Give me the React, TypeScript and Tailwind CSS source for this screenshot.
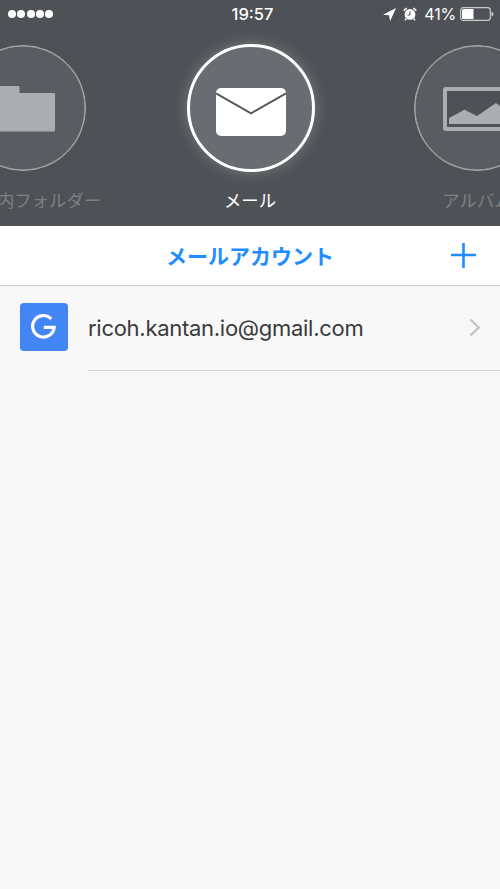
import type { ReactNode } from "react";

type Source = {
  id: string;
  label: string;
  icon: ReactNode;
  active?: boolean;
};

const FolderIcon = () => (
  <svg width="64" height="46" viewBox="0 0 64 46" fill="#acadaf">
    <path d="M1 0H27.500a1 1 0 0 1 1 1V7H63a1 1 0 0 1 1 1V44.500a1 1 0 0 1-1 1H1a1 1 0 0 1-1-1V1a1 1 0 0 1 1-1Z" />
  </svg>
);

const MailIcon = () => (
  <svg width="70" height="48" viewBox="0 0 70 48" fill="none">
    <rect width="70" height="48" rx="5" fill="#fff" />
    <path d="M0 5.300 35 25.300 70 5.300" stroke="#55585c" strokeWidth="2" />
  </svg>
);

const AlbumIcon = () => (
  <svg width="68" height="44" viewBox="0 0 68 44" fill="none">
    <rect x="2" y="2" width="64" height="40" rx="1" fill="#4e5156" stroke="#acadaf" strokeWidth="4" />
    <path d="M6 37V31L21.500 22.800 34 29 53 16 62 23V37Z" fill="#acadaf" />
  </svg>
);

const sources: Source[] = [
  { id: "folder", label: "アプリ内フォルダー", icon: <FolderIcon /> },
  { id: "mail", label: "メール", icon: <MailIcon />, active: true },
  { id: "album", label: "アルバム", icon: <AlbumIcon /> },
];

const accounts = ["ricoh.kantan.io@gmail.com"];

const StatusBar = () => (
  <div className="grid h-[28px] grid-cols-3 items-center pl-2 pr-[6px] text-white">
    <div className="flex gap-[1.300px]">
      {[0, 1, 2, 3, 4].map((dot) => (
        <span key={dot} className="size-[8px] rounded-full bg-white" />
      ))}
    </div>
    <p className="pl-[3px] text-center text-[16.500px] leading-none font-medium">19:57</p>
    <div className="flex items-center justify-end">
      <svg width="13" height="13" viewBox="0 0 13 13" className="mr-[7px]">
        <path d="M13 0 7.200 13 6 7.200 0 6.800Z" fill="#fff" />
      </svg>
      <svg width="14" height="14" viewBox="0 0 14 14" className="mr-[7px]" fill="none">
        <circle cx="7" cy="7.400" r="5.400" fill="#fff" />
        <path d="M.7 3.600 3.700 1M13.300 3.600 10.300 1M3.200 11.700 2 13.200M10.800 11.700 12 13.200" stroke="#fff" strokeWidth="1.500" />
        <path d="M7 4.200V8H4.500" stroke="#4e5156" />
      </svg>
      <span className="mr-[4px] text-[16px] leading-none tracking-[-0.2px]">41%</span>
      <svg width="34" height="14" viewBox="0 0 34 14" fill="none">
        <rect x=".7" y=".7" width="29.600" height="12.600" rx="2.500" stroke="#c9cacb" strokeWidth="1.200" />
        <path d="M3.500 2H13.500V12H3.500A1.500 1.500 0 0 1 2 10.500V3.500A1.500 1.500 0 0 1 3.500 2Z" fill="#fff" />
        <path d="M31.500 4.500Q33.500 5 33.500 7T31.500 9.500Z" fill="#c9cacb" />
      </svg>
    </div>
  </div>
);

const SourceItem = ({ source }: { source: Source }) => (
  <li className="flex w-[227px] shrink-0 flex-col items-center">
    <div className="flex h-[128px] items-center">
      <div
        className={
          source.active
            ? "ml-px flex size-[128px] items-center justify-center rounded-full border-[3px] border-white bg-[#696c70] pt-[7px] shadow-[0_0_14px_1px_rgba(255,255,255,0.22)]"
            : "flex size-[126px] items-center justify-center rounded-full border-[1.500px] border-[#acadaf] bg-[#595c61] pt-[2px] shadow-[inset_0_0_0_0.500px_#acadaf]"
        }
      >
        {source.icon}
      </div>
    </div>
    <p
      className={
        source.active
          ? "mt-4 text-[17.400px] leading-[26px] whitespace-nowrap text-white"
          : "mt-4 text-[17.400px] leading-[26px] whitespace-nowrap text-[#7e8083]"
      }
    >
      {source.label}
    </p>
  </li>
);

const App = () => {
  return (
    <div className="flex h-[889px] w-[500px] flex-col overflow-hidden bg-[#f8f8f8] font-['Inter','Noto_Sans_CJK_JP',sans-serif]">
      <header className="h-[226px] shrink-0 overflow-hidden bg-[#4e5156]">
        <StatusBar />
        <ul className="flex justify-center pt-4">
          {sources.map((source) => (
            <SourceItem key={source.id} source={source} />
          ))}
        </ul>
      </header>

      <div className="grid h-[60px] shrink-0 grid-cols-[1fr_auto_1fr] items-center border-b border-[#c8c8c8] bg-white px-6 text-[#1f8cff]">
        <h1 className="col-start-2 pt-px text-[21px] leading-none font-bold">メールアカウント</h1>
        <button className="justify-self-end" aria-label="add">
          <svg width="25" height="25" viewBox="0 0 25 25" stroke="currentColor" strokeWidth="2.600">
            <path d="M12.500 0V25M0 12H25" />
          </svg>
        </button>
      </div>

      <ul>
        {accounts.map((account) => (
          <li key={account} className="flex h-[85px] pl-5">
            <div className="mt-[17px] flex size-[48px] items-center justify-center rounded-[4px] bg-[#4285f4]">
              <svg width="26" height="26" viewBox="0 0 26 26" fill="none" stroke="#fff" strokeWidth="3.200">
                <path d="M20.300 4.900A10.800 10.800 0 1 0 23.200 13.400H12.800" />
              </svg>
            </div>
            <div className="ml-5 flex flex-1 items-center justify-between border-b border-[#d2d2d2] pr-[19px]">
              <span className="text-[22px] tracking-[-0.280px] text-[#3a3a3a]">{account}</span>
              <svg width="12" height="18" viewBox="0 0 12 18" fill="none" stroke="#c2c2c6" strokeWidth="2.300">
                <path d="M1.500 .7 9.800 8.500 1.500 16.300" />
              </svg>
            </div>
          </li>
        ))}
      </ul>
    </div>
  );
};

export default App;
